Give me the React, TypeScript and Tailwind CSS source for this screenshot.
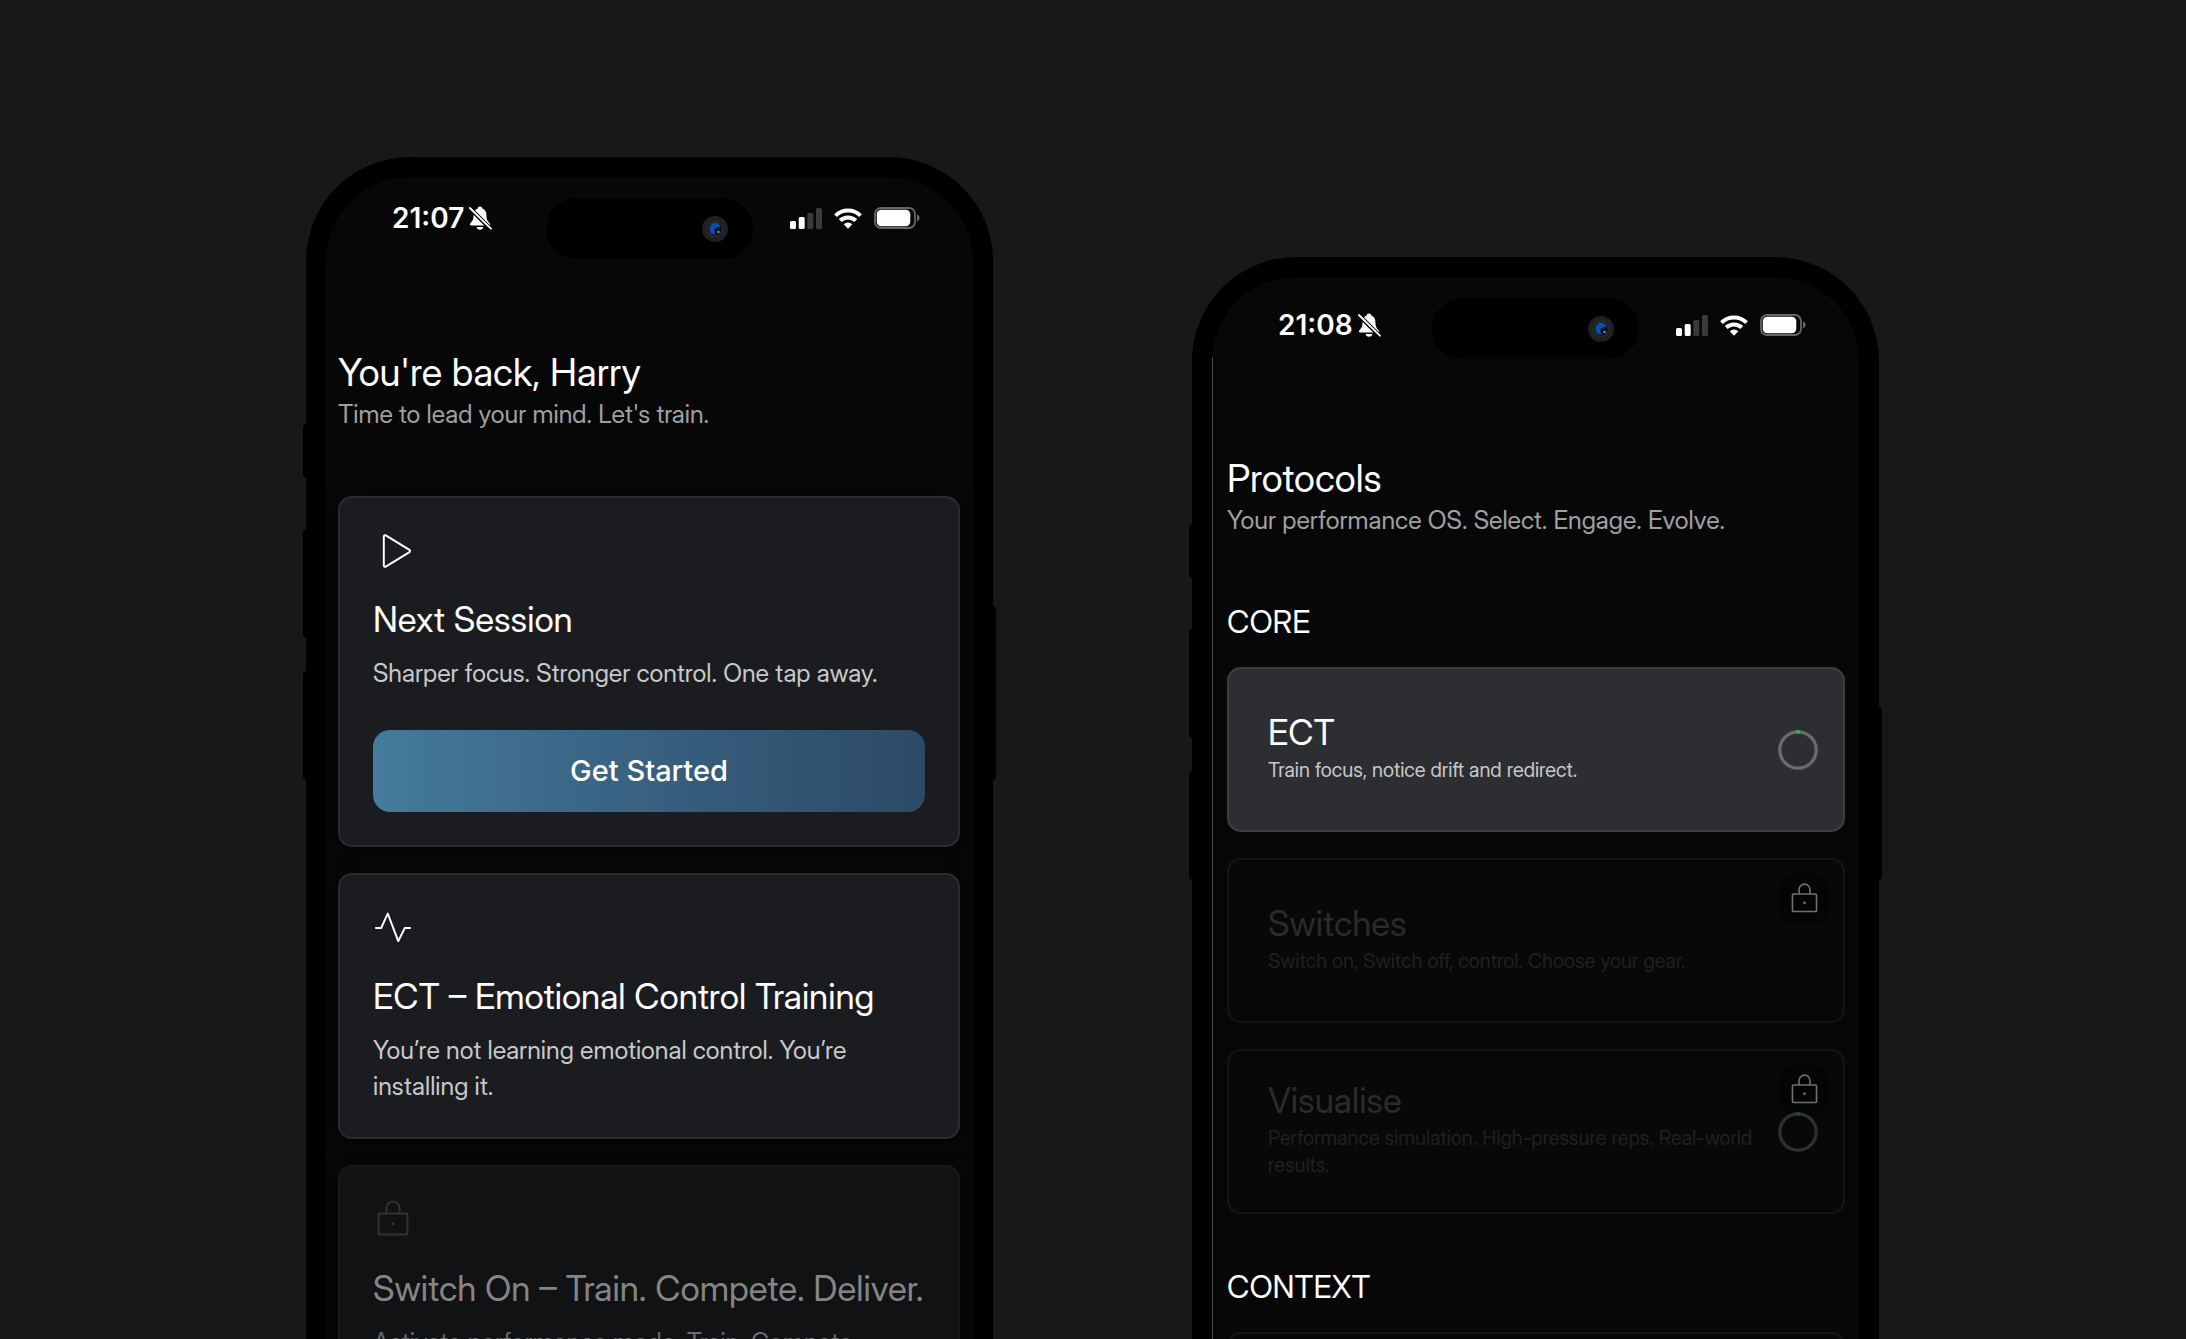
import type { ReactNode } from 'react';
import clsx from 'clsx';
import { PiLockLight, PiPlayLight, PiPulseLight } from 'react-icons/pi';

const SESSIONS = [
  {
    icon: PiPlayLight,
    title: 'Next Session',
    text: 'Sharper focus. Stronger control. One tap away.',
    action: 'Get Started',
    locked: false,
  },
  {
    icon: PiPulseLight,
    title: 'ECT – Emotional Control Training',
    text: 'You’re not learning emotional control. You’re installing it.',
    locked: false,
  },
  {
    icon: PiLockLight,
    title: 'Switch On – Train. Compete. Deliver.',
    text: 'Activate performance mode. Train. Compete.',
    locked: true,
  },
];

const CORE = [
  { title: 'ECT', text: 'Train focus, notice drift and redirect.', locked: false, ring: true },
  { title: 'Switches', text: 'Switch on, Switch off, control. Choose your gear.', locked: true, ring: false },
  { title: 'Visualise', text: 'Performance simulation. High-pressure reps. Real-world results.', locked: true, ring: true },
];

function StatusBar({ time, className }: { time: string; className: string }) {
  return (
    <div className={clsx('flex items-center justify-between pl-[66px] pr-[53px]', className)}>
      <div className="flex items-center gap-[5px]">
        <span className="font-['Inter',sans-serif] text-[28px] leading-8 font-semibold">{time}</span>
        <svg width="23" height="24" viewBox="0 0 23 24" aria-hidden="true">
          <path
            d="M11 .5c-1.300 0-2.200.8-2.300 2C5.800 3.600 4.700 6 4.600 9c-.1 4.500-1 6-3.200 8.200-.9.900-.5 2.200.9 2.200h17.400c1.400 0 1.800-1.300.9-2.200C18.400 15 17.500 13.500 17.400 9c-.1-3-1.200-5.400-4.100-6.500-.1-1.200-1-2-2.300-2zM7.600 21h6.800c-.3 1.700-1.600 2.700-3.400 2.700S7.900 22.700 7.600 21z"
            fill="#fff"
          />
          <path d="M0 3 21 24M1.200.8 23 22.500" stroke="#070707" strokeWidth="1.800" />
          <path d="m.9 2 21 20.700" stroke="#fff" strokeWidth="1.800" strokeLinecap="round" />
        </svg>
      </div>
      <div className="flex items-center gap-3">
        <svg width="32" height="21" viewBox="0 0 32 21" aria-hidden="true">
          <rect x="0" y="13" width="6" height="8" rx="1.500" fill="#fff" />
          <rect x="8.700" y="9" width="6" height="12" rx="1.500" fill="#fff" />
          <rect x="17.300" y="5" width="6" height="16" rx="1.500" fill="#3a3a3a" />
          <rect x="26" y="0" width="6" height="21" rx="1.500" fill="#3a3a3a" />
        </svg>
        <svg width="28" height="21" viewBox="0 0 28 21" fill="none" stroke="#fff" strokeWidth="4" aria-hidden="true">
          <path d="M1.500 7.600a18 18 0 0 1 25 0" />
          <path d="M6.200 12.500a11.300 11.300 0 0 1 15.600 0" />
          <path d="M14 20.700 9.700 16.200a6.300 6.300 0 0 1 8.600 0z" fill="#fff" stroke="none" />
        </svg>
        <svg width="46" height="22" viewBox="0 0 46 22" aria-hidden="true">
          <rect x="1" y="1" width="40" height="20" rx="6" fill="none" stroke="#666" strokeWidth="1.800" />
          <rect x="2.800" y="2.800" width="33.500" height="16.500" rx="4.500" fill="#fff" />
          <path d="M43 7.500c1.600.6 2.600 1.900 2.600 3.500s-1 2.900-2.600 3.500z" fill="#666" />
        </svg>
      </div>
    </div>
  );
}

function Phone({ time, barClass, className, children }: { time: string; barClass: string; className?: string; children: ReactNode }) {
  return (
    <section className={clsx('relative flex w-[687px] shrink-0 flex-col rounded-t-[104px] bg-black px-5 pt-5', className)}>
      {/* Side keys */}
      <span className="absolute top-[267px] -left-[3px] h-[54px] w-1 rounded-l-sm bg-black" />
      <span className="absolute top-[372px] -left-[3px] h-[109px] w-1 rounded-l-sm bg-black" />
      <span className="absolute top-[514px] -left-[3px] h-[109px] w-1 rounded-l-sm bg-black" />
      <span className="absolute top-[449px] -right-[3px] h-[174px] w-1 rounded-r-sm bg-black" />

      {/* Dynamic island */}
      <div className="absolute inset-x-0 top-[41px] z-10 mx-auto flex h-[61px] w-[207px] items-center justify-end rounded-full bg-black pr-[25px]">
        <svg width="26" height="26" viewBox="0 0 26 26" aria-hidden="true">
          <circle cx="13" cy="13" r="13" fill="#1f2021" />
          <circle cx="13" cy="13" r="9" fill="#262728" />
          <circle cx="13" cy="13" r="6.500" fill="#04101f" />
          <path d="M7.500 14.500c-.8-4 2-7.800 5.500-7.800 3.200 0 5.300 2.300 5.300 5-2.800-1-6 .3-6 3 0 1.700 1 2.700 2 3.600-3.300.7-6.200-.8-6.800-3.800z" fill="#0a4fae" />
          <circle cx="16.500" cy="16" r="1.100" fill="#9fc0d8" />
        </svg>
      </div>

      <div className="min-h-0 flex-1 overflow-hidden rounded-t-[84px] bg-[#070707]">
        <StatusBar time={time} className={barClass} />
        {children}
      </div>
    </section>
  );
}

function SessionCard({ icon: Icon, title, text, action, locked }: (typeof SESSIONS)[number]) {
  return (
    <article
      className={clsx(
        'rounded-[14px] border-2 px-[33px] pt-8 pb-[33px] shadow-[0_4px_16px_rgba(0,0,0,0.6)]',
        locked ? 'border-[#17181a] bg-[#111214]' : 'border-[#2a2b2f] bg-[#1b1c20]',
      )}
    >
      <Icon size={42} className={clsx('-ml-px', locked ? 'text-[#323335]' : 'text-white')} />
      <h2 className={clsx('mt-[25px] text-[35px] leading-[44px] whitespace-nowrap', locked ? 'text-[#858586]' : 'text-white')}>{title}</h2>
      <p className={clsx('mt-[14px] text-[25px] leading-9', locked ? 'text-[#6b6b6d]' : 'text-[#c8c8ca]')}>{text}</p>
      {action && (
        <button
          type="button"
          className="mt-[39px] h-[82px] w-full rounded-[17px] bg-linear-to-r from-[#447b9e] via-[#386080] to-[#2c4a66] font-['Inter',sans-serif] text-[29px] font-medium text-white"
        >
          {action}
        </button>
      )}
    </article>
  );
}

function ProgressRing({ dim }: { dim: boolean }) {
  return (
    <svg width="40" height="40" viewBox="0 0 40 40" fill="none" strokeWidth="3.300" className="relative z-10 shrink-0" aria-hidden="true">
      <circle cx="20" cy="20" r="18.200" stroke={dim ? '#303030' : '#6b6b6b'} />
      <path d="M18.300 1.900h3.400" stroke={dim ? '#14532d' : '#22c55e'} />
    </svg>
  );
}

function ProtocolCard({ title, text, locked, ring }: (typeof CORE)[number]) {
  return (
    <article
      className={clsx(
        'relative flex h-[165px] items-center justify-between gap-3 rounded-[14px] border-2 pr-[25px] pl-[39px]',
        locked ? 'border-[#151515] bg-[#080808]' : 'border-[#3c3d42] bg-[#2d2e32]',
      )}
    >
      <div className="pb-[6px]">
        <h3 className={clsx('text-[35px] leading-[44px]', locked ? 'text-[#2b2b2b]' : 'text-white')}>{title}</h3>
        <p className={clsx('mt-[3px] text-[20px] leading-[27px]', locked ? 'text-[#202020]' : 'text-[#c8c8ca]')}>{text}</p>
      </div>
      {locked && (
        <span className="absolute top-[13px] right-[13px] flex size-[52px] items-center justify-center rounded-[20px] bg-[#050505]">
          <PiLockLight size={35} className="text-[#707070]" />
        </span>
      )}
      {ring && <ProgressRing dim={locked} />}
    </article>
  );
}

function ScreenHeader({ title, text }: { title: string; text: string }) {
  return (
    <header className="pb-16">
      <h1 className="text-[38px] leading-[46px]">{title}</h1>
      <p className="mt-px text-[25px] leading-9 text-[#a0a0a0]">{text}</p>
    </header>
  );
}

export default function App() {
  return (
    <main className="flex h-screen justify-center gap-[199px] overflow-hidden bg-[#18181a] pt-[157px] pr-px font-['Inter_Display','Inter',sans-serif] text-white">
      <Phone time="21:07" barClass="h-[82px]">
        <div className="pt-[90px] pr-[13px] pl-3">
          <ScreenHeader title="You're back, Harry" text="Time to lead your mind. Let's train." />
          <div className="flex flex-col gap-[26px]">
            {SESSIONS.map((s) => (
              <SessionCard key={s.title} {...s} />
            ))}
          </div>
        </div>
      </Phone>

      <Phone time="21:08" barClass="h-[96px]" className="mt-[100px]">
        <div className="-mt-4 h-full border-l border-[#4a4a4a]">
          <div className="px-[14px] pt-[98px]">
            <ScreenHeader title="Protocols" text="Your performance OS. Select. Engage. Evolve." />
            <h2 className="pb-[25px] text-[31px] leading-10">CORE</h2>
            <div className="flex flex-col gap-[26px]">
              {CORE.map((p) => (
                <ProtocolCard key={p.title} {...p} />
              ))}
            </div>
            <h2 className="pt-[53px] pb-[25px] text-[31px] leading-10">CONTEXT</h2>
            <article className="h-[165px] rounded-[14px] border-2 border-[#151515] bg-[#080808]" />
          </div>
        </div>
      </Phone>
    </main>
  );
}
